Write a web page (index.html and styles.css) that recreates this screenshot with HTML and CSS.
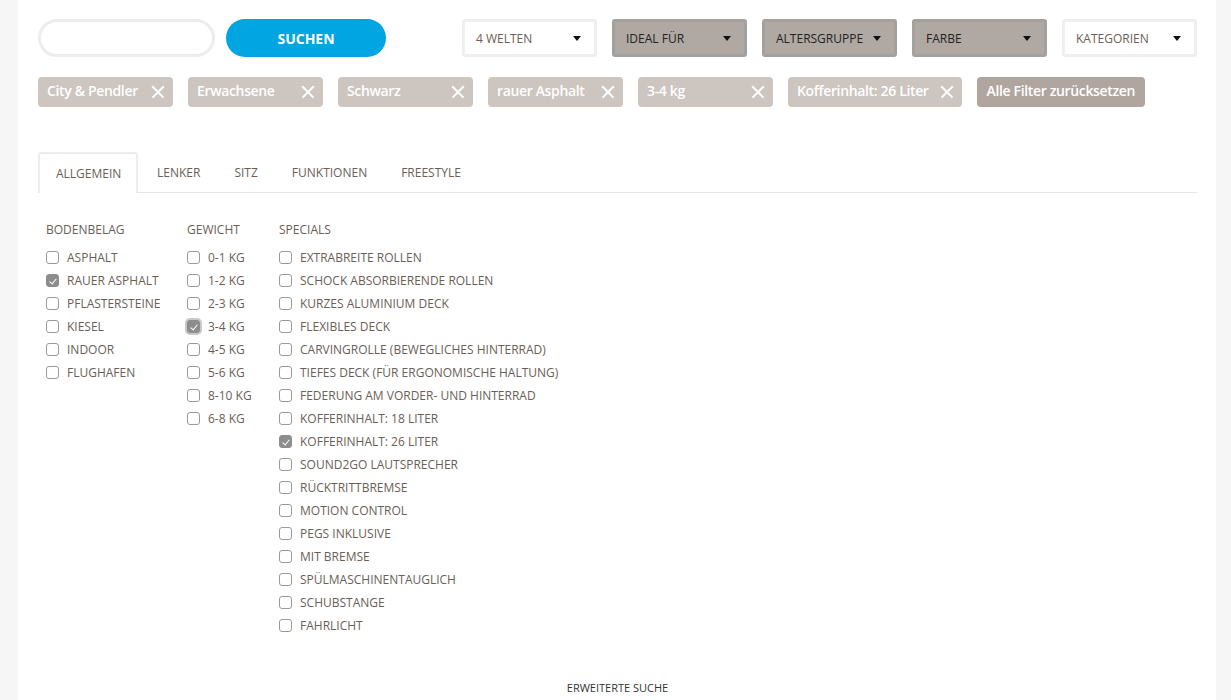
FILE: index.html
```html
<!DOCTYPE html>
<html lang="de">
<head>
<meta charset="utf-8">
<title>Filter</title>
<link rel="stylesheet" href="styles.css">
</head>
<body>
<div class="panel">
  <div class="toprow">
    <div class="search"></div>
    <button class="btn-search">SUCHEN</button>
    <div class="drops">
      <div class="drop">4 WELTEN<span class="caret"></span></div>
      <div class="drop dark">IDEAL FÜR<span class="caret"></span></div>
      <div class="drop dark">ALTERSGRUPPE<span class="caret"></span></div>
      <div class="drop dark">FARBE<span class="caret"></span></div>
      <div class="drop">KATEGORIEN<span class="caret"></span></div>
    </div>
  </div>

  <div class="tags">
    <div class="tag">City &amp; Pendler<span class="x"></span></div>
    <div class="tag">Erwachsene<span class="x"></span></div>
    <div class="tag">Schwarz<span class="x"></span></div>
    <div class="tag">rauer Asphalt<span class="x"></span></div>
    <div class="tag">3-4 kg<span class="x"></span></div>
    <div class="tag">Kofferinhalt: 26 Liter<span class="x"></span></div>
    <div class="tag reset">Alle Filter zurücksetzen</div>
  </div>

  <div class="tabs">
    <div class="tab active">ALLGEMEIN</div>
    <div class="tab">LENKER</div>
    <div class="tab">SITZ</div>
    <div class="tab">FUNKTIONEN</div>
    <div class="tab">FREESTYLE</div>
  </div>

  <div class="cols">
    <div class="col">
      <div class="head">BODENBELAG</div>
      <div class="item"><span class="cb"></span>ASPHALT</div>
      <div class="item"><span class="cb on"></span>RAUER ASPHALT</div>
      <div class="item"><span class="cb"></span>PFLASTERSTEINE</div>
      <div class="item"><span class="cb"></span>KIESEL</div>
      <div class="item"><span class="cb"></span>INDOOR</div>
      <div class="item"><span class="cb"></span>FLUGHAFEN</div>
    </div>
    <div class="col">
      <div class="head">GEWICHT</div>
      <div class="item"><span class="cb"></span>0-1 KG</div>
      <div class="item"><span class="cb"></span>1-2 KG</div>
      <div class="item"><span class="cb"></span>2-3 KG</div>
      <div class="item"><span class="cb on focus"></span>3-4 KG</div>
      <div class="item"><span class="cb"></span>4-5 KG</div>
      <div class="item"><span class="cb"></span>5-6 KG</div>
      <div class="item"><span class="cb"></span>8-10 KG</div>
      <div class="item"><span class="cb"></span>6-8 KG</div>
    </div>
    <div class="col">
      <div class="head">SPECIALS</div>
      <div class="item"><span class="cb"></span>EXTRABREITE ROLLEN</div>
      <div class="item"><span class="cb"></span>SCHOCK ABSORBIERENDE ROLLEN</div>
      <div class="item"><span class="cb"></span>KURZES ALUMINIUM DECK</div>
      <div class="item"><span class="cb"></span>FLEXIBLES DECK</div>
      <div class="item"><span class="cb"></span>CARVINGROLLE (BEWEGLICHES HINTERRAD)</div>
      <div class="item"><span class="cb"></span>TIEFES DECK (FÜR ERGONOMISCHE HALTUNG)</div>
      <div class="item"><span class="cb"></span>FEDERUNG AM VORDER- UND HINTERRAD</div>
      <div class="item"><span class="cb"></span>KOFFERINHALT: 18 LITER</div>
      <div class="item"><span class="cb on"></span>KOFFERINHALT: 26 LITER</div>
      <div class="item"><span class="cb"></span>SOUND2GO LAUTSPRECHER</div>
      <div class="item"><span class="cb"></span>RÜCKTRITTBREMSE</div>
      <div class="item"><span class="cb"></span>MOTION CONTROL</div>
      <div class="item"><span class="cb"></span>PEGS INKLUSIVE</div>
      <div class="item"><span class="cb"></span>MIT BREMSE</div>
      <div class="item"><span class="cb"></span>SPÜLMASCHINENTAUGLICH</div>
      <div class="item"><span class="cb"></span>SCHUBSTANGE</div>
      <div class="item"><span class="cb"></span>FAHRLICHT</div>
    </div>
  </div>

  <div class="more">ERWEITERTE SUCHE</div>
</div>
</body>
</html>
```

FILE: styles.css
```css
html, body {
  margin: 0;
  padding: 0;
}
body {
  background: #f6f6f6;
  font-family: "Open Sans", "Liberation Sans", sans-serif;
  color: #6b5e56;
  height: 700px;
  overflow: hidden;
}
.panel {
  margin-left: 18px;
  width: 1198px;
  min-height: 760px;
  background: #fff;
  box-sizing: border-box;
  padding: 19px 19px 0 20px;
}
.toprow {
  display: flex;
  align-items: center;
  height: 38px;
}
.search {
  width: 177px;
  height: 38px;
  box-sizing: border-box;
  border: 3px solid #ededed;
  border-radius: 19px;
  background: #fff;
}
.btn-search {
  margin-left: 11px;
  width: 160px;
  height: 38px;
  border: 0;
  border-radius: 19px;
  background: #00a5e1;
  color: #fff;
  font-family: "Open Sans", "Liberation Sans", sans-serif;
  font-weight: 700;
  font-size: 14px;
  padding: 0;
}
.drops {
  margin-left: auto;
  display: flex;
  gap: 15px;
}
.drop {
  width: 135px;
  height: 38px;
  box-sizing: border-box;
  border: 3px solid #efefef;
  border-radius: 3px;
  background: #fff;
  font-size: 12px;
  color: #6b5e56;
  display: flex;
  align-items: center;
  padding: 0 13px 0 11px;
  justify-content: space-between;
}
.drop.dark {
  background: #b0a8a3;
  border-color: #a3a09d;
  color: #222;
}
.caret {
  width: 0;
  height: 0;
  border-left: 4px solid transparent;
  border-right: 4px solid transparent;
  border-top: 5px solid #111;
}
.tags {
  margin-top: 20px;
  display: flex;
  gap: 15px;
}
.tag {
  min-width: 135px;
  height: 30px;
  box-sizing: border-box;
  border-radius: 4px;
  background: #cdc5bf;
  color: #fff;
  font-size: 14px;
  line-height: 28px;
  padding-bottom: 2px;
  font-weight: 600;
  display: flex;
  align-items: center;
  justify-content: space-between;
  gap: 12px;
  padding-left: 9px;
  padding-right: 9px;
  letter-spacing: -0.35px;
}
.tag.reset {
  background: #b0a69f;
  min-width: 0;
  padding-left: 10px;
  padding-right: 10px;
}
.x {
  position: relative;
  width: 12px;
  height: 12px;
  flex: none;
  margin-top: 2px;
}
.x::before, .x::after {
  content: "";
  position: absolute;
  left: -2px;
  top: 5px;
  width: 16px;
  height: 1.5px;
  background: #fff;
  transform: rotate(45deg);
}
.x::after {
  transform: rotate(-45deg);
}
.tabs {
  margin-top: 46px;
  display: flex;
  align-items: flex-end;
  border-bottom: 1px solid #e6e6e6;
  height: 39px;
}
.tab {
  font-size: 12px;
  line-height: 38px;
  padding: 0 17px;
  color: #6b5e56;
}
.tab.active + .tab {
  padding-left: 19px;
}
.tab.active {
  width: 100px;
  box-sizing: border-box;
  border: 2px solid #ededed;
  border-bottom: 0;
  border-radius: 3px 3px 0 0;
  padding: 0 0 0 16px;
  line-height: 39px;
  background: #fff;
  margin-bottom: -1px;
}
.cols {
  display: grid;
  grid-template-columns: 141px 92px auto;
  padding-left: 8px;
  margin-top: 29px;
}
.head {
  font-size: 12px;
  line-height: 16px;
  margin-bottom: 8px;
}
.item {
  display: flex;
  align-items: center;
  font-size: 12px;
  height: 23px;
  white-space: nowrap;
}
.cb {
  position: relative;
  width: 11px;
  height: 11px;
  border: 1px solid #9a9a9a;
  border-radius: 3px;
  margin-right: 8px;
  background: #fff;
  flex: none;
}
.cb.on {
  background: #8d8d8d;
  border-color: #8d8d8d;
}
.cb.on::after {
  content: "";
  position: absolute;
  left: 3.5px;
  top: 1.5px;
  width: 3px;
  height: 6px;
  border-right: 1.5px solid #fff;
  border-bottom: 1.5px solid #fff;
  transform: rotate(40deg);
}
.cb.focus {
  box-shadow: 0 0 0 2px #c9c9c9;
}
.more {
  margin-top: 43px;
  text-align: center;
  font-size: 11px;
  color: #333;
}
```
